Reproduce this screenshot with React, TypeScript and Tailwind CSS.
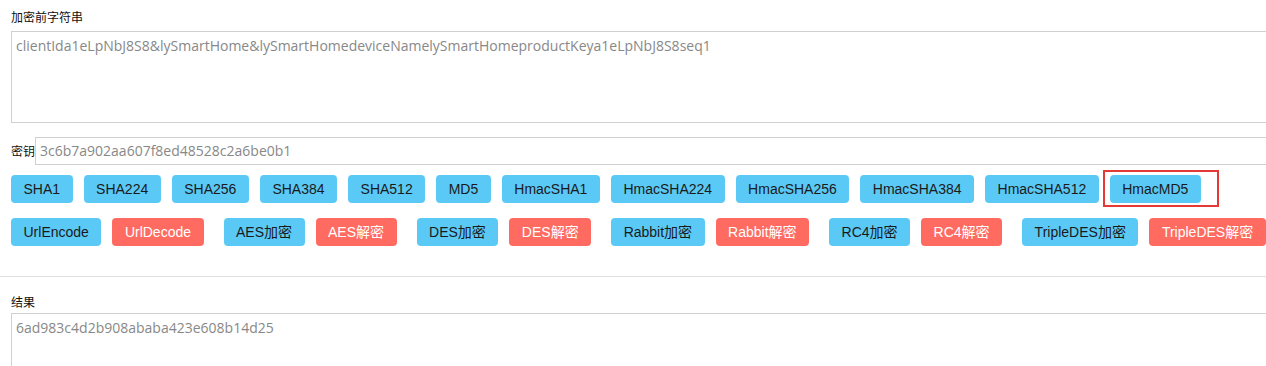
import React from "react";

const blue = "bg-[#5bc9f5] text-[#1a1a1a]";
const red = "bg-[#ff6b61] text-white";

function Btn({ label, color, className = "" }: { label: string; color: "b" | "r"; className?: string }) {
  return (
    <button
      className={`h-[28px] shrink-0 rounded-[4px] px-[12.5px] text-[14px] leading-[28px] whitespace-nowrap ${color === "b" ? blue : red} ${className}`}
      style={{ fontFamily: '"Liberation Sans", Arial, "Noto Sans CJK SC", sans-serif' }}
    >
      {label}
    </button>
  );
}

export default function App() {
  const row1 = ["SHA1", "SHA224", "SHA256", "SHA384", "SHA512", "MD5", "HmacSHA1", "HmacSHA224", "HmacSHA256", "HmacSHA384", "HmacSHA512"];
  const pairs: [string, string][] = [
    ["UrlEncode", "UrlDecode"],
    ["AES加密", "AES解密"],
    ["DES加密", "DES解密"],
    ["Rabbit加密", "Rabbit解密"],
    ["RC4加密", "RC4解密"],
    ["TripleDES加密", "TripleDES解密"],
  ];
  const cjk = { fontFamily: '"Noto Sans CJK SC", sans-serif' };
  const mono = { fontFamily: '"Open Sans", "Noto Sans", sans-serif' };
  return (
    <div className="w-[1266px] h-[366px] overflow-hidden bg-white">
      <div className="w-[1400px] pl-[11px] pt-[8px]">
        <div className="text-[12px] leading-[18px] text-[#111] h-[23px]" style={cjk}>加密前字符串</div>
        <div className="h-[92px] w-[1300px] border border-[#d0d0d0] px-[4px] pt-[4px] text-[14px] leading-[20px] text-[#888]" style={mono}>
          clientIda1eLpNbJ8S8&amp;lySmartHome&amp;lySmartHomedeviceNamelySmartHomeproductKeya1eLpNbJ8S8seq1
        </div>
        <div className="mt-[14px] flex items-center">
          <span className="text-[12px] w-[24px] text-[#111]" style={cjk}>密钥</span>
          <div className="h-[28px] w-[1300px] border border-[#d0d0d0] px-[4px] text-[14px] leading-[26px] text-[#888]" style={mono}>
            3c6b7a902aa607f8ed48528c2a6be0b1
          </div>
        </div>
        <div className="mt-[10px] flex gap-[11px]">
          {row1.map((l) => (
            <Btn key={l} label={l} color="b" />
          ))}
          <div className="relative">
            <Btn label="HmacMD5" color="b" />
            <div className="absolute left-[-7px] top-[-5px] w-[116px] h-[37px] border-2 border-[#e53935]" />
          </div>
        </div>
        <div className="mt-[15px] flex gap-[20px]">
          {pairs.map(([a, b]) => (
            <div key={a} className="flex gap-[11px] shrink-0">
              <Btn label={a} color="b" />
              <Btn label={b} color="r" />
            </div>
          ))}
        </div>
        <div className="ml-[-11px] mt-[30px] h-px bg-[#e0e0e0]" />
        <div className="mt-[16px] text-[12px] leading-[18px] h-[20px] text-[#111]" style={cjk}>结果</div>
        <div className="h-[92px] w-[1300px] border border-[#d0d0d0] px-[4px] pt-[4px] text-[14px] leading-[20px] text-[#888]" style={mono}>
          6ad983c4d2b908ababa423e608b14d25
        </div>
      </div>
    </div>
  );
}
